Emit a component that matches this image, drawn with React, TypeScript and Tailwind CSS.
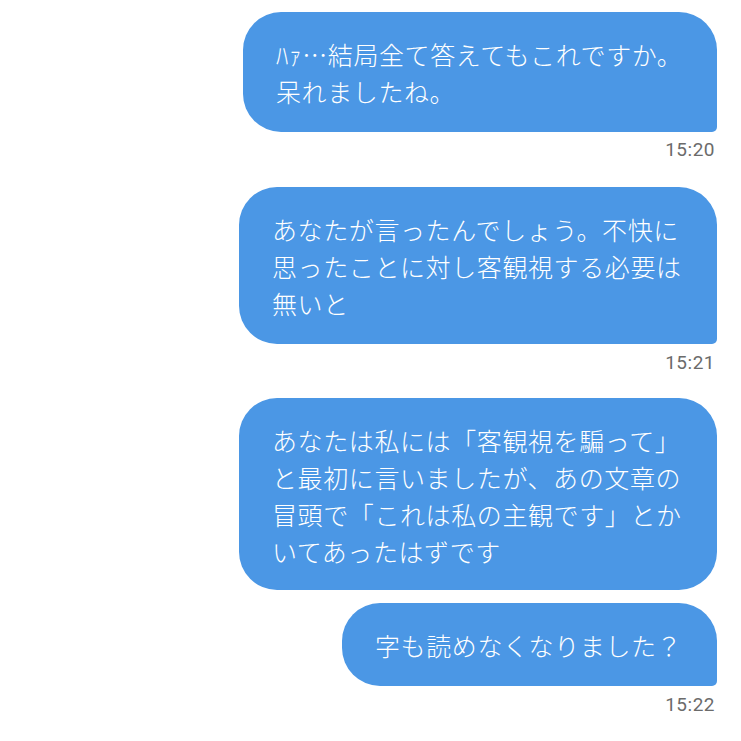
import React from "react";

const jp = { fontFamily: '"Noto Sans CJK JP", "Noto Sans", sans-serif' };

function Bubble({ lines, width, tail = true, pb = "pb-[22px]" }: { lines: string[]; width: number; tail?: boolean; pb?: string }) {
  return (
    <div
      className={`bg-[#4b97e5] text-white text-[25px] font-light leading-[37px] tracking-[0.6px] pl-[33px] pt-[24px] ${pb} whitespace-nowrap ${
        tail ? "rounded-[38px] rounded-br-[5px]" : "rounded-[38px]"
      }`}
      style={{ ...jp, width }}
    >
      {lines.map((l, i) => (
        <div key={i}>{l}</div>
      ))}
    </div>
  );
}

function Time({ t }: { t: string }) {
  return (
    <div
      className="text-[19px] leading-[24px] text-[#6b6b6b] tracking-[0.5px] pr-[2px]"
      style={{ fontFamily: 'Roboto, "Liberation Sans", sans-serif' }}
    >
      {t}
    </div>
  );
}

export default function App() {
  return (
    <div className="w-[741px] h-[741px] bg-white flex flex-col items-end pr-[24px] pt-[12px] overflow-hidden">
      <Bubble width={474} lines={["ﾊｧ…結局全て答えてもこれですか。", "呆れましたね。"]} />
      <div className="mt-[6px]">
        <Time t="15:20" />
      </div>
      <div className="mt-[25px]">
        <Bubble
          width={478}
          lines={["あなたが言ったんでしょう。不快に", "思ったことに対し客観視する必要は", "無いと"]}
        />
      </div>
      <div className="mt-[7px]">
        <Time t="15:21" />
      </div>
      <div className="mt-[23px]">
        <Bubble
          width={478}
          tail={false}
          pb="pb-[20px]"
          lines={[
            "あなたは私には「客観視を騙って」",
            "と最初に言いましたが、あの文章の",
            "冒頭で「これは私の主観です」とか",
            "いてあったはずです",
          ]}
        />
      </div>
      <div className="mt-[13px]">
        <Bubble width={375} lines={["字も読めなくなりました？"]} />
      </div>
      <div className="mt-[7px]">
        <Time t="15:22" />
      </div>
    </div>
  );
}
